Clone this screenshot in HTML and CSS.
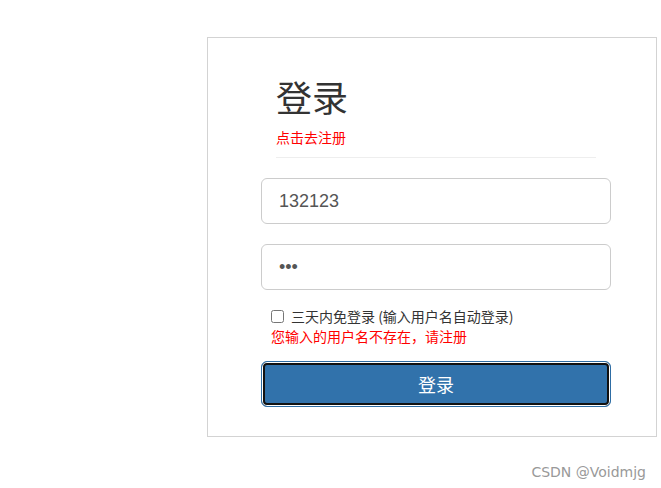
FILE: index.html
```html
<!DOCTYPE html>
<html lang="zh-CN">
<head>
<meta charset="utf-8">
<title>登录</title>
<link rel="stylesheet" href="styles.css">
</head>
<body>
<div class="panel">
  <form class="form">
    <div class="header">
      <h1 class="title">登录</h1>
      <a class="reg" href="#">点击去注册</a>
      <hr class="rule">
    </div>
    <input class="field" type="text" value="132123">
    <input class="field" type="password" value="123">
    <label class="remember"><input class="check" type="checkbox"><span>三天内免登录 (输入用户名自动登录)</span></label>
    <div class="error">您输入的用户名不存在，请注册</div>
    <button class="submit" type="button">登录</button>
  </form>
</div>
<div class="watermark">CSDN @Voidmjg</div>
</body>
</html>
```
FILE: styles.css
```css
html, body {
  margin: 0;
  padding: 0;
  background: #fff;
}
body {
  width: 661px;
  height: 488px;
  overflow: hidden;
  font-family: "Liberation Sans", "Noto Sans CJK SC", sans-serif;
  color: #333;
}
.panel {
  box-sizing: border-box;
  width: 450px;
  height: 400px;
  margin: 37px 0 0 207px;
  border: 1px solid #d3d3d3;
  padding: 0 0 0 53px;
}
.form {
  width: 350px;
  display: flex;
  flex-direction: column;
  align-items: stretch;
  margin: 0;
}
.header {
  padding: 0 15px;
}
.title {
  margin: 36px 0 0;
  font-family: "Noto Sans CJK SC", sans-serif;
  font-weight: normal;
  font-size: 36px;
  line-height: 44px;
  color: #333;
}
.reg {
  display: block;
  margin-top: 9px;
  font-family: "Noto Sans CJK SC", sans-serif;
  font-size: 14px;
  line-height: 20px;
  color: #f00;
  text-decoration: none;
}
.rule {
  margin: 10px 0 0;
  border: 0;
  border-top: 1px solid #eee;
  height: 0;
}
.field {
  box-sizing: border-box;
  height: 46px;
  margin-top: 20px;
  padding: 10px 17px;
  border: 1px solid #ccc;
  border-radius: 6px;
  font-family: "Liberation Sans", sans-serif;
  font-size: 18px;
  color: #555;
  outline: none;
}
.remember {
  display: flex;
  align-items: center;
  margin: 16px 0 0 10px;
  font-family: "Noto Sans CJK SC", sans-serif;
  font-size: 14px;
  line-height: 20px;
  color: #333;
}
.check {
  width: 13px;
  height: 13px;
  margin: 0 7px 0 0;
}
.error {
  margin: 0 0 0 10px;
  font-family: "Noto Sans CJK SC", sans-serif;
  font-size: 14px;
  line-height: 20px;
  color: #f00;
}
.submit {
  box-sizing: border-box;
  height: 46px;
  margin-top: 15px;
  border: 1px solid #2e6da4;
  border-radius: 6px;
  background: #3172ab;
  box-shadow: inset 0 0 0 1px #fff, inset 0 0 0 3px #111;
  color: #fff;
  font-family: "Noto Sans CJK SC", sans-serif;
  font-size: 18px;
  padding: 0;
}
.watermark {
  margin: 26px 15px 0 0;
  text-align: right;
  font-family: "DejaVu Sans", sans-serif;
  font-size: 14px;
  line-height: 18px;
  color: #999;
}
```
